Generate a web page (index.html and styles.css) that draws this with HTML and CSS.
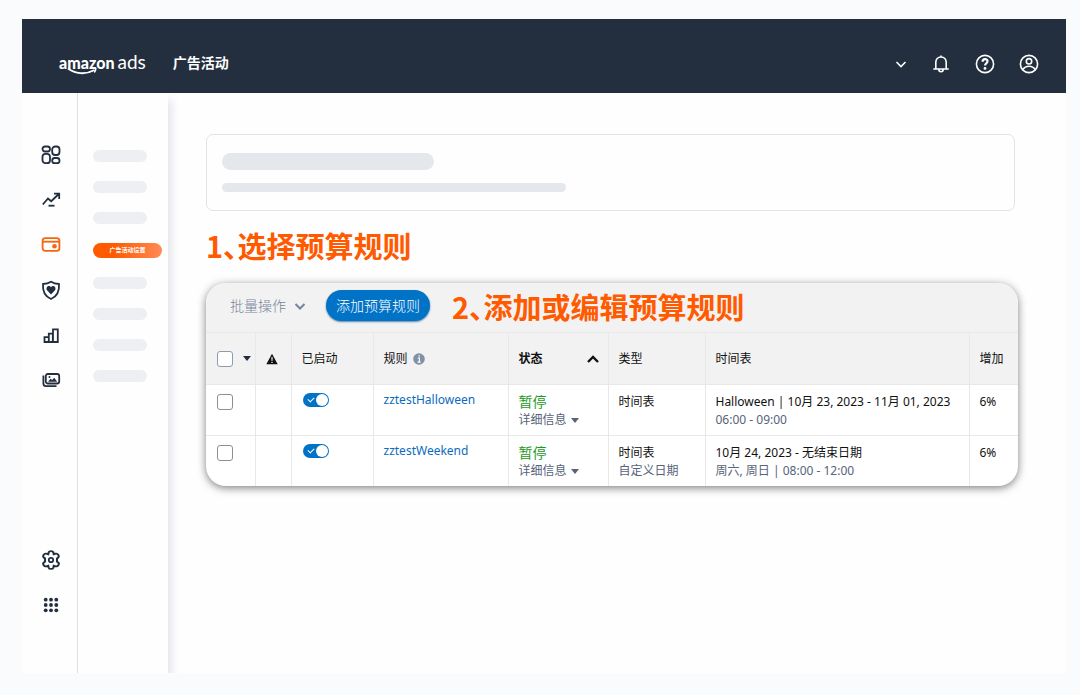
FILE: index.html
```html
<!DOCTYPE html>
<html lang="zh-CN">
<head>
<meta charset="utf-8">
<meta name="viewport" content="width=device-width, initial-scale=1">
<title>amazon ads 广告活动</title>
<link rel="stylesheet" href="styles.css">
</head>
<body>
<div class="app">
  <header class="topbar">
    <a class="brand" href="#" aria-label="amazon ads">
      <span class="brand-name">amazon</span><span class="brand-ads">ads</span>
      <svg class="brand-smile" viewBox="0 0 32 9" fill="none" stroke="currentColor" aria-hidden="true"><path d="M1 1.500C8 6.800 19 8.200 28.500 3" stroke-width="1.900"/><path d="M25 1.200c2-.7 3.800-.7 4.500-.2.500.9-.2 3-1.300 4.500" stroke-width="1.500"/></svg>
    </a>
    <span class="topbar-title">广告活动</span>
    <nav class="topbar-tools" aria-label="账户工具">
      <button class="tool tool--small" type="button" aria-label="展开"><svg viewBox="0 0 12 20"><path d="M1.500 8 6 12.500 10.500 8"/></svg></button>
      <button class="tool" type="button" aria-label="通知"><svg viewBox="0 0 20 20"><path d="M2.300 15h15.400M4.800 15V8.500c0-3 2-5.500 5.200-5.500s5.200 2.500 5.200 5.500V15M10 3V1.500M7.800 15.500c0 3 4.400 3 4.400 0"/></svg></button>
      <button class="tool" type="button" aria-label="帮助"><svg viewBox="0 0 20 20"><circle cx="10" cy="10" r="8.600"/><path d="M7.600 7.700C7.600 4.300 12.500 4.400 12.500 7.300c0 2-2.400 2-2.400 4.200" stroke-width="2.200"/><circle cx="10" cy="14.400" r="1.400" fill="currentColor" stroke="none"/></svg></button>
      <button class="tool" type="button" aria-label="用户"><svg viewBox="0 0 20 20"><circle cx="10" cy="10" r="8.600"/><circle cx="10" cy="7.300" r="2.700"/><path d="M3.800 15.600c2.800-4.400 9.600-4.400 12.400 0"/></svg></button>
    </nav>
  </header>

  <div class="body">
    <nav class="rail" aria-label="主导航">
      <a class="rail-item" href="#" aria-label="概览"><svg viewBox="0 0 20 20"><rect x="1.500" y="1.500" width="7.500" height="5" rx="2.500"/><rect x="11.200" y="1.500" width="7.300" height="8.500" rx="3"/><rect x="1.500" y="8.800" width="7.500" height="9.400" rx="3"/><rect x="11.200" y="13" width="7.300" height="5.200" rx="2.500"/></svg></a>
      <a class="rail-item" href="#" aria-label="趋势"><svg viewBox="0 0 20 20"><path d="m1.800 14.500 5.200-6 3.200 2.700L17.800 4M13 3.700h5.200V9"/><path d="M7.500 15.700h6"/></svg></a>
      <a class="rail-item rail-item--active" href="#" aria-label="广告活动"><svg viewBox="0 0 20 20"><rect x="1.600" y="3.200" width="16.800" height="12.600" rx="2.600"/><path d="M2 6.700h16"/><circle cx="13.500" cy="11.300" r="2.300" fill="currentColor" stroke="none"/></svg></a>
      <a class="rail-item" href="#" aria-label="品牌安全"><svg viewBox="0 0 20 20"><path d="M10 1.700c2.500 1.600 5 2.200 8 2.300.5 6.600-1.500 12.200-8 15-6.500-2.800-8.500-8.400-8-15 3-.1 5.500-.7 8-2.300z"/><path d="M10 14.500 6 10.300C4 7.300 8.200 4.400 10 7.300c1.800-2.900 6 0 4 3z" fill="currentColor" stroke="none"/></svg></a>
      <a class="rail-item" href="#" aria-label="报告"><svg viewBox="0 0 20 20"><path d="M3.500 17v-4.800h4.300V17zM7.800 17V8.700h4V17zM12 17V4.300h4.800V17z"/></svg></a>
      <a class="rail-item" href="#" aria-label="素材"><svg viewBox="0 0 20 20"><rect x="4.800" y="4" width="13.400" height="9.500" rx="2"/><path d="M2.400 5.500v8c0 1.600.8 2.600 2.600 2.600h10.500"/><path d="m7 11.700 2.500-3 1.700 1.200 2-2.200 3 4z" fill="currentColor" stroke="none"/><circle cx="8.500" cy="7" r="1" fill="currentColor" stroke="none"/></svg></a>
      <a class="rail-item rail-item--end" href="#" aria-label="设置"><svg viewBox="0 0 20 20"><path d="M8 2.700c.4-1.600 3.600-1.600 4 0l.4 1.800 1.700-.5c1.700-.5 3.400 2.200 2.300 3.400L15.200 8.600v2.800l1.300 1.200c1.100 1.200-.7 3.900-2.300 3.400l-1.800-.5-.4 1.800c-.4 1.600-3.600 1.600-4 0l-.4-1.800-1.800.5c-1.600.5-3.400-2.200-2.300-3.400l1.300-1.200V8.600L3.500 7.400C2.400 6.200 4.200 3.500 5.800 4l1.800.5z" transform="matrix(1.150 0 0 1.050 -1.500 -.5)"/><circle cx="10" cy="10" r="2.200"/></svg></a>
      <a class="rail-item" href="#" aria-label="应用"><svg viewBox="0 0 20 20"><g fill="currentColor" stroke="none"><circle cx="4.700" cy="4.700" r="1.900"/><circle cx="10" cy="4.700" r="1.900"/><circle cx="15.300" cy="4.700" r="1.900"/><circle cx="4.700" cy="10" r="1.900"/><circle cx="10" cy="10" r="1.900"/><circle cx="15.300" cy="10" r="1.900"/><circle cx="4.700" cy="15.300" r="1.900"/><circle cx="10" cy="15.300" r="1.900"/><circle cx="15.300" cy="15.300" r="1.900"/></g></svg></a>
    </nav>

    <aside class="submenu">
      <span class="stub"></span>
      <span class="stub"></span>
      <span class="stub"></span>
      <a class="submenu-active" href="#">广告活动设置</a>
      <span class="stub"></span>
      <span class="stub"></span>
      <span class="stub"></span>
      <span class="stub"></span>
    </aside>

    <main class="content">
      <section class="summary">
        <div class="bar bar--title"></div>
        <div class="bar bar--text"></div>
      </section>

      <h2 class="step">1、选择预算规则</h2>

      <section class="panel">
        <div class="toolbar">
          <div class="bulk">
            <select class="bulk-select" aria-label="批量操作"><option>批量操作</option></select>
            <svg class="bulk-arrow" viewBox="0 0 12 12" aria-hidden="true"><path d="M1.500 4 6 8.500 10.500 4"/></svg>
          </div>
          <button class="add" type="button">添加预算规则</button>
          <h2 class="step step--inline">2、添加或编辑预算规则</h2>
        </div>

        <table class="rules">
          <colgroup>
            <col class="col-check"><col class="col-alert"><col class="col-on"><col class="col-rule"><col class="col-status"><col class="col-type"><col><col class="col-gain">
          </colgroup>
          <thead>
            <tr>
              <th scope="col"><span class="pick"><input class="check" type="checkbox" aria-label="全选"><span class="caret"></span></span></th>
              <th scope="col"><svg class="alert" viewBox="0 0 12 12" role="img" aria-label="警告"><path d="M6 .8 11.700 11.200H.3z" fill="#111"/><path d="M6 4v3.700M6 8.700V10" stroke="#f2f2f2" stroke-width="1.200"/></svg></th>
              <th scope="col">已启动</th>
              <th scope="col"><span class="rule-head">规则<svg class="info" viewBox="0 0 12 12" role="img" aria-label="说明"><circle cx="6" cy="6" r="5.800" fill="#8290a6"/><path d="M4.800 5h1.600v4M4.500 9.200h3.200M5.500 2.800h1.300" stroke="#fff" stroke-width="1.200" fill="none"/></svg></span></th>
              <th scope="col" class="sorted"><span class="sort">状态<svg class="sort-icon" viewBox="0 0 14 10" aria-hidden="true"><path d="M2 8 7 3l5 5"/></svg></span></th>
              <th scope="col">类型</th>
              <th scope="col">时间表</th>
              <th scope="col">增加</th>
            </tr>
          </thead>
          <tbody>
            <tr>
              <td><input class="check" type="checkbox" aria-label="选择 zztestHalloween"></td>
              <td></td>
              <td class="upper"><input class="switch" type="checkbox" role="switch" checked aria-label="启动 zztestHalloween"></td>
              <td class="upper"><a class="rule-link" href="#">zztestHalloween</a></td>
              <td><div class="paused">暂停</div><button class="details" type="button">详细信息<span class="caret caret--soft"></span></button></td>
              <td>时间表</td>
              <td><div>Halloween | 10月 23, 2023 - 11月 01, 2023</div><div class="muted">06:00 - 09:00</div></td>
              <td>6%</td>
            </tr>
            <tr>
              <td><input class="check" type="checkbox" aria-label="选择 zztestWeekend"></td>
              <td></td>
              <td class="upper"><input class="switch" type="checkbox" role="switch" checked aria-label="启动 zztestWeekend"></td>
              <td class="upper"><a class="rule-link" href="#">zztestWeekend</a></td>
              <td><div class="paused">暂停</div><button class="details" type="button">详细信息<span class="caret caret--soft"></span></button></td>
              <td><div>时间表</div><div class="muted">自定义日期</div></td>
              <td><div>10月 24, 2023 - 无结束日期</div><div class="muted">周六, 周日 | 08:00 - 12:00</div></td>
              <td>6%</td>
            </tr>
          </tbody>
        </table>
      </section>
    </main>
  </div>
</div>
</body>
</html>
```

FILE: styles.css
```css
* { box-sizing: border-box; }

body {
  margin: 0;
  min-height: 100vh;
  display: flex;
  padding: 19px 14px 22px 22px;
  background: #fafbfc;
  color: #111;
  font: 12px/18px "Noto Sans", "Noto Sans CJK SC", sans-serif;
}

button, select { font: inherit; color: inherit; border: 0; padding: 0; background: none; }
a { color: inherit; text-decoration: none; }
svg { display: block; }

.app { flex: 1; display: flex; flex-direction: column; background: #fefefe; }

/* Top bar */
.topbar {
  height: 74px;
  display: flex;
  align-items: center;
  padding: 14px 27px 0 37px;
  background: #232f3e;
  color: #fff;
}
.brand { position: relative; display: flex; align-items: baseline; gap: 3px; padding-bottom: 2px; font-family: Lato, sans-serif; line-height: 22px; }
.brand-name { font-size: 16px; font-weight: 900; }
.brand-ads { font-size: 19px; }
.brand-smile { position: absolute; left: 8px; top: 16px; width: 31px; height: 9px; }
.topbar-title { margin-left: 27px; font-size: 14px; font-weight: 700; }
.topbar-tools { margin-left: auto; padding-top: 2px; display: flex; align-items: center; gap: 24px; }
.tool { width: 20px; height: 20px; }
.tool--small { width: 12px; }
.tool svg { width: 100%; height: 100%; fill: none; stroke: currentColor; stroke-width: 1.6; }

/* Side navigation */
.body { flex: 1; display: flex; }
.rail {
  width: 56px;
  display: flex;
  flex-direction: column;
  align-items: center;
  gap: 25px;
  padding: 52px 0 58px 2px;
  border-right: 1px solid #dce1e8;
  color: #232f3e;
}
.rail-item { width: 20px; height: 20px; }
.rail-item svg { width: 20px; height: 20px; fill: none; stroke: currentColor; stroke-width: 1.8; }
.rail-item--active { color: #f7650f; }
.rail-item--end { margin-top: auto; }

.submenu {
  width: 90px;
  display: flex;
  flex-direction: column;
  gap: 19px;
  padding: 57px 6px 0 15px;
  box-shadow: 5px 6px 8px -1px #e4e5ec;
  clip-path: inset(0 -14px 0 0);
}
.stub { width: 54px; height: 12px; border-radius: 6px; background: #eeeff3; }
.submenu-active {
  height: 15px;
  border-radius: 8px;
  background: linear-gradient(90deg, #ff5a00 30%, #ff8a57);
  color: #fff;
  font-size: 6px;
  font-weight: 700;
  line-height: 15px;
  text-align: center;
}

/* Content */
.content { flex: 1; min-width: 0; padding: 41px 48px 0 38px; }
.summary {
  margin-right: 3px;
  padding: 18px 15px;
  border: 1px solid #e1e3e9;
  border-radius: 7px;
}
.bar { border-radius: 9px; background: #e4e8ec; }
.bar--title { width: 212px; height: 17px; margin-bottom: 13px; }
.bar--text { width: 344px; height: 9px; }

.step {
  margin: 14px 0 18px;
  color: #ff5a00;
  font-size: 29px;
  font-weight: 700;
  line-height: 40px;
  font-family: "Noto Sans CJK SC", sans-serif;
  font-feature-settings: "halt";
}
.step--inline { margin: 0 0 0 22px; }

.panel {
  overflow: hidden;
  border-radius: 20px;
  background: #fff;
  box-shadow: 0 2px 8px rgba(0, 0, 0, .5);
}
.toolbar { height: 49px; display: flex; align-items: center; padding: 0 0 4px 24px; background: #f2f2f2; }
.bulk { position: relative; }
.bulk-select { appearance: none; width: 76px; color: #77859b; font-size: 14px; font-weight: 300; line-height: 20px; display: block; }
.bulk-arrow { position: absolute; right: 0; top: 4px; width: 12px; height: 12px; fill: none; stroke: #76849b; stroke-width: 2; pointer-events: none; }
.add {
  height: 31px;
  margin-left: 20px;
  padding: 0 10px;
  border-radius: 16px;
  background: #0073c7;
  box-shadow: 0 1px 2px #5c83a8;
  color: #fff;
  font-size: 14px;
  font-weight: 300;
}

/* Rules table */
.rules { width: 100%; table-layout: fixed; border-collapse: collapse; }
.col-check, .col-gain { width: 49px; }
.col-alert { width: 36px; }
.col-on { width: 82px; }
.col-rule { width: 135px; }
.col-status { width: 100px; }
.col-type { width: 97px; }
.rules th, .rules td { border: 1px solid #e8e8e8; padding: 8px 0 5px 10px; text-align: left; vertical-align: top; white-space: nowrap; }
.rules th { height: 52px; padding: 0 0 0 10px; background: #f2f2f2; font-weight: 400; vertical-align: middle; }
.rules td { height: 51px; }
.rules tr > :first-child { border-left: 0; }
.rules tr > :last-child { border-right: 0; }
.rules tbody tr:last-child td { height: 50px; border-bottom: 0; }
.rules td.upper { padding-top: 6px; }
.rules th.sorted { font-weight: 700; }

.check { appearance: none; display: block; width: 16px; height: 16px; margin: 1px 0 0 1px; border: 1px solid #8c8f94; border-radius: 3px; background: #fff; }
.pick { display: flex; align-items: center; gap: 10px; }
.pick .check { margin-top: 0; border-color: #8d9bb0; }
.caret { border: 4px solid transparent; border-top: 5px solid #232f3e; border-bottom: 0; }
.caret--soft { border-top-color: #56637a; }
.alert { width: 12px; height: 12px; }
.rule-head { display: flex; align-items: center; gap: 5px; }
.info { width: 12px; height: 12px; }
.sort { display: flex; align-items: center; justify-content: space-between; padding-right: 8px; }
.sort-icon { width: 14px; height: 10px; fill: none; stroke: #111; stroke-width: 2.4; }

.switch { appearance: none; position: relative; display: block; width: 26px; height: 14px; margin: 2px 0 0 1px; border-radius: 7px; background: #0073c7; }
.switch::before { content: ""; position: absolute; left: 5px; top: 4px; width: 5px; height: 3px; border: solid #fff; border-width: 0 0 1px 1px; transform: rotate(-45deg); }
.switch::after { content: ""; position: absolute; right: 1px; top: 1px; width: 12px; height: 12px; border-radius: 50%; background: #fff; }
.rule-link { color: #0b6cbd; }
.paused { color: #1d9a1d; font-size: 14px; }
.details { display: flex; align-items: center; gap: 4px; color: #56637a; }
.muted { color: #56637a; }
```
